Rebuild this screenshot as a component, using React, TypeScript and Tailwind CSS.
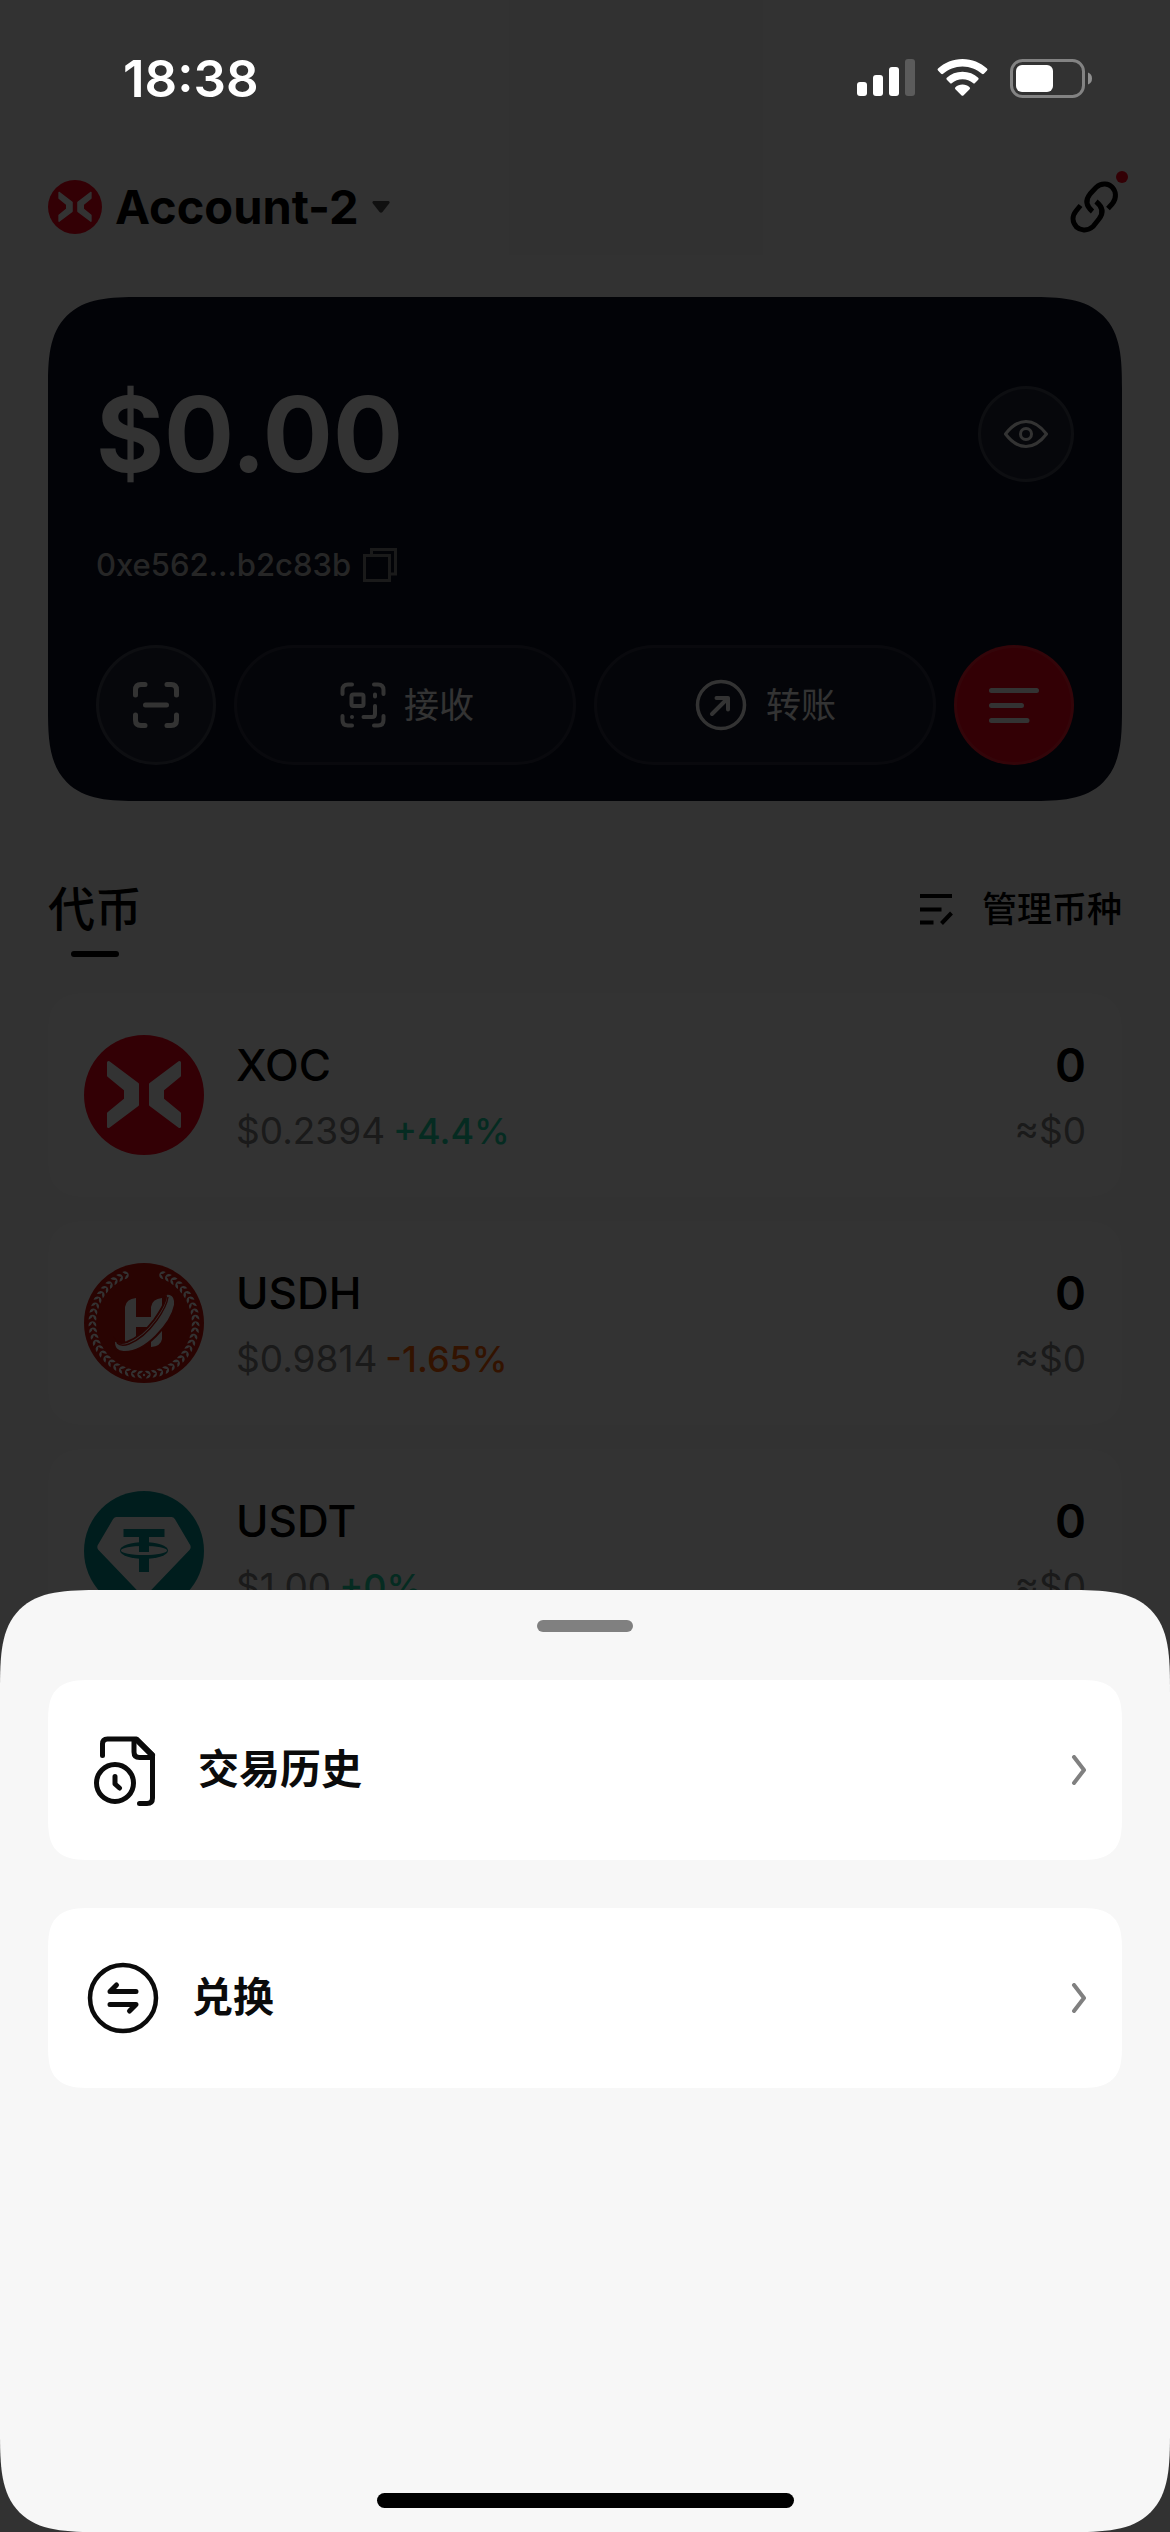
import React from "react";

function XocLogo({ className }: { className: string }) {
  return (
    <svg viewBox="0 0 120 120" className={className} aria-hidden="true">
      <circle cx="60" cy="60" r="60" fill="#ff001a" />
      <g fill="#fff" stroke="#fff" strokeWidth="3" strokeLinejoin="round">
        <path d="M24.5 27.5 53.5 49.3V69.7L24.5 91.5V78.5L41.5 64.5V54.5L24.5 40.5Z" />
        <path d="M95.5 27.5 66.5 49.3V69.7L95.5 91.5V78.5L78.5 64.5V54.5L95.5 40.5Z" />
      </g>
    </svg>
  );
}

const laurelAngles = Array.from({ length: 23 }, (_, i) => 7 + i * 7.05);

function UsdhLogo({ className }: { className: string }) {
  const leaf = "M0 .4Q-4.400 0 -3.800 -5Q-.8 -3.400 0 -.8Q.8 -3.400 3.800 -5Q4.400 0 0 .4Z";
  return (
    <svg viewBox="0 0 120 120" className={className} aria-hidden="true">
      <circle cx="60" cy="60" r="60" fill="#cd140a" />
      <g fill="#fff">
        <circle cx="60" cy="112" r="1.2" />
        {laurelAngles.map((a) => (
          <g key={a}>
            <path d={leaf} transform={`rotate(${a} 60 60) translate(60 111.5) rotate(90)`} />
            <path d={leaf} transform={`rotate(${-a} 60 60) translate(60 111.5) rotate(-90)`} />
          </g>
        ))}
        <path d="M41 44Q42 36 52 35V54H67V44Q68 36 78 35V76Q77 83 67 84V64H52V80L41 84Z" />
        <path
          d="M30 76Q34 82 43 79Q58 73 70 57Q82 40 82 33Q79 32 76 34Q80 30 86 31Q92 33 91 42Q88 57 72 73Q56 89 41 89Q29 90 30 76Z"
          stroke="#cd140a"
          strokeWidth="2"
        />
        <path d="M33 80Q37 84 45 81Q60 75 73 57Q83 43 84 34" fill="none" stroke="#cd140a" strokeWidth="1.4" />
      </g>
    </svg>
  );
}

function UsdtLogo({ className }: { className: string }) {
  return (
    <svg viewBox="0 0 120 120" className={className} aria-hidden="true">
      <circle cx="60" cy="60" r="60" fill="#009393" />
      <path
        d="M32.5 27H87.5Q89 27 90 28.5L105.500 55Q106 57 105 58L61 104Q60 105 59 104L15 58Q14 57 14.500 55L30 28.500Q31 27 32.500 27Z"
        fill="#fff"
        stroke="#fff"
        strokeWidth="2"
      />
      <ellipse cx="60" cy="59.500" rx="24" ry="8.500" fill="#009393" />
      <ellipse cx="60" cy="59.500" rx="23" ry="4.500" fill="#fff" />
      <path d="M39.500 38H80.500V46H65V61H55V46H39.500ZM55 64H65V81H55Z" fill="#009393" />
    </svg>
  );
}

function SignalIcon() {
  return (
    <svg viewBox="0 0 58 38" className="h-[38px] w-[58px]" fill="#fff" aria-hidden="true">
      <rect x="0" y="23" width="10" height="14" rx="3" />
      <rect x="16" y="16" width="10" height="21" rx="3" />
      <rect x="32" y="8" width="10" height="29" rx="3" />
      <rect x="48" y="0" width="10" height="37" rx="3" fill="#5b5b5b" />
    </svg>
  );
}

function WifiIcon() {
  return (
    <svg viewBox="0 0 51 38" className="h-[38px] w-[51px]" fill="#fff" aria-hidden="true">
      <path d="M25.500 0C35 0 43.500 3.700 50 9.600Q51 10.600 50 11.600L46.900 14.800Q45.900 15.700 44.900 14.800C39.700 10.200 33 7.400 25.500 7.400S11.300 10.200 6.100 14.800Q5.100 15.700 4.100 14.800L1 11.600Q0 10.600 1 9.600C7.500 3.700 16 0 25.500 0Z" />
      <path d="M25.500 12.800C31.700 12.800 37.100 15 41.200 18.800Q42.200 19.800 41.200 20.800L38 24Q37 25 36 24C33.200 21.600 29.600 20.200 25.500 20.200S17.800 21.600 15 24Q14 25 13 24L9.800 20.800Q8.800 19.800 9.800 18.800C13.900 15 19.300 12.800 25.500 12.800Z" />
      <path d="M25.500 25.600C28.300 25.600 30.700 26.600 32.600 28.200Q33.600 29.200 32.600 30.200L26.400 36.400Q25.500 37.300 24.600 36.400L18.400 30.200Q17.400 29.200 18.400 28.200C20.300 26.600 22.700 25.600 25.500 25.600Z" />
    </svg>
  );
}

function BatteryIcon() {
  return (
    <svg viewBox="0 0 82 39" className="h-[39px] w-[82px]" aria-hidden="true">
      <rect x="1.500" y="1.500" width="72" height="36" rx="11" fill="none" stroke="#838383" strokeWidth="3" />
      <rect x="6" y="6" width="37" height="27" rx="6" fill="#fff" />
      <path d="M78 13.500Q82 15 82 19.500T78 25.500Z" fill="#8f8f8f" />
    </svg>
  );
}

function LinkIcon() {
  return (
    <svg viewBox="0 0 54 54" className="size-[54px]" fill="none" stroke="#000" strokeWidth="5" aria-hidden="true">
      <path d="M24.500 31.500C17 25 18 19 22 14L28 7.500C34 2 41 4 44 7C48 11 49 18 44.500 23.500L40 28.500" />
      <path d="M28 21.500C36 28 35 34 31 39L25 46.500C19 52 12 50 8.500 47C4 42 4 36 8 31L12.500 25.500" />
    </svg>
  );
}

const lineIcon = {
  viewBox: "0 0 54 54",
  fill: "none",
  stroke: "currentColor",
  strokeLinecap: "round" as const,
  strokeLinejoin: "round" as const,
  "aria-hidden": true,
};

function ScanIcon() {
  return (
    <svg {...lineIcon} className="size-[54px]" strokeWidth="5">
      <path d="M6.500 17V12Q6.500 6.500 12 6.500H16M38 6.500H42Q47.500 6.500 47.500 12V17M47.500 37V42Q47.500 47.500 42 47.500H38M16 47.500H12Q6.500 47.500 6.500 42V37M16.500 27H37.500" />
    </svg>
  );
}

function ReceiveIcon() {
  return (
    <svg {...lineIcon} className="size-[54px]" strokeWidth="4">
      <path d="M6.500 16V12Q6.500 6.500 12 6.500H16M38 6.500H42Q47.500 6.500 47.500 12V16M47.500 38V42Q47.500 47.500 42 47.500H38M16 47.500H12Q6.500 47.500 6.500 42V38" />
      <rect x="15.500" y="16.500" width="12" height="11.500" rx="2" />
      <path d="M39 16.500V18.500M39 28V36Q39 39 36 39H27.500M16 39V39.100" />
    </svg>
  );
}

function TransferIcon() {
  return (
    <svg {...lineIcon} className="size-[54px]" strokeWidth="3.500">
      <circle cx="27" cy="27" r="23.500" />
      <path d="M18 36 34 20M22.500 20H34V31.500" strokeWidth="4" />
    </svg>
  );
}

function MenuIcon() {
  return (
    <svg {...lineIcon} className="size-[54px]" strokeWidth="5">
      <path d="M4.500 12.500H49.500M4.500 27.500H34.500M4.500 42.500H40" />
    </svg>
  );
}

function EyeIcon() {
  return (
    <svg {...lineIcon} className="size-[54px]" strokeWidth="3">
      <path d="M6.500 27C13 18.500 20 14.500 27 14.500S41 18.500 47.500 27C41 35.500 34 39.500 27 39.500S13 35.500 6.500 27Z" />
      <circle cx="27" cy="27" r="5.500" />
    </svg>
  );
}

function CopyIcon() {
  return (
    <svg viewBox="0 0 34 34" className="size-[34px]" fill="none" stroke="#808080" strokeWidth="3" aria-hidden="true">
      <path d="M8.500 7V1.500H32.500V26H27" />
      <rect x="1.500" y="7.500" width="25" height="25" />
    </svg>
  );
}

function ManageIcon() {
  return (
    <svg viewBox="0 0 36 36" className="size-9" fill="none" stroke="#000" strokeWidth="4" aria-hidden="true">
      <path d="M2 5H34M2 18.500H23.500M2 31.500H15.500M23.500 32.500 33.500 22" />
    </svg>
  );
}

function HistoryIcon() {
  return (
    <svg viewBox="0 0 84 84" className="size-[84px]" fill="none" stroke="#0b0b0b" strokeWidth="5" strokeLinecap="round" strokeLinejoin="round" aria-hidden="true">
      <path d="M18.500 27.500V16Q18.500 11 23.500 11H52L68.500 27V70Q68.500 75.500 63 75.500H55.500" />
      <path d="M50 12V24Q50 29.500 55.500 29.500H68" />
      <path d="M53 12 68 27" strokeWidth="6" />
      <circle cx="31" cy="55" r="18.500" />
      <path d="M31 48.500V56L35.500 60" />
    </svg>
  );
}

function SwapIcon() {
  return (
    <svg viewBox="0 0 78 78" className="size-[78px]" fill="none" stroke="#0b0b0b" strokeWidth="4.500" strokeLinecap="round" strokeLinejoin="round" aria-hidden="true">
      <circle cx="39" cy="39" r="33" />
      <path d="M52 32.500H26L32.500 26M26 45.500H52L45.500 52" strokeWidth="5" />
    </svg>
  );
}

function Chevron() {
  return (
    <svg viewBox="0 0 16 30" className="h-[30px] w-4" fill="none" stroke="#808080" strokeWidth="4" strokeLinecap="round" strokeLinejoin="round" aria-hidden="true">
      <path d="M4 2 14 15 4 28" />
    </svg>
  );
}

interface Token {
  name: string;
  price: string;
  change: string;
  changeClass: string;
  Logo: (p: { className: string }) => React.JSX.Element;
}

const tokens: Token[] = [
  { name: "XOC", price: "$0.2394", change: "+4.4%", changeClass: "text-[#19d7a5]", Logo: XocLogo },
  { name: "USDH", price: "$0.9814", change: "-1.65%", changeClass: "text-[#ff6000]", Logo: UsdhLogo },
  { name: "USDT", price: "$1.00", change: "+0%", changeClass: "text-[#19d7a5]", Logo: UsdtLogo },
];

const softCard = "rounded-[32px] supports-[corner-shape:squircle]:rounded-[44px] supports-[corner-shape:squircle]:[corner-shape:superellipse(1.6)]";

function TokenRow({ name, price, change, changeClass, Logo }: Token) {
  return (
    <li className={`flex items-center gap-8 bg-white px-9 pt-[39px] pb-[33px] ${softCard}`}>
      <Logo className="-mt-1.5 size-[120px] shrink-0" />
      <div className="min-w-0 flex-1 leading-[66px]">
        <p className="text-[44px] font-medium">{name}</p>
        <p className="flex items-baseline gap-2 text-[37px] text-[#808080]">
          {price}
          <span className={`text-[36px] font-medium ${changeClass}`}>{change}</span>
        </p>
      </div>
      <div className="text-right leading-[66px]">
        <p className="text-[47px] font-semibold">0</p>
        <p className="text-[37px] text-[#808080]">≈$0</p>
      </div>
    </li>
  );
}

function SheetItem({ icon, label }: { icon: React.ReactNode; label: string }) {
  return (
    <button type="button" className={`flex h-[180px] w-full items-center gap-[30px] bg-white px-9 text-left ${softCard}`}>
      {icon}
      <span className="flex-1 text-[41px] font-bold text-[#0b0b0b]">{label}</span>
      <Chevron />
    </button>
  );
}

export default function App() {
  return (
    <div className="relative flex h-screen min-h-[1800px] w-full flex-col overflow-hidden bg-[#f7f7f7] font-['Inter','Noto_Sans_CJK_SC',sans-serif] text-black">
      <div className="relative z-20 flex h-36 shrink-0 items-center justify-between pt-3 pr-[78px] pl-[123px] text-white">
        <time className="text-[51px] leading-none font-semibold">18:38</time>
        <div className="flex items-center gap-[22px]">
          <SignalIcon />
          <WifiIcon />
          <BatteryIcon />
        </div>
      </div>

      <main className="flex flex-col px-12">
        <header className="flex h-[126px] items-center justify-between">
          <button type="button" className="flex items-center gap-[13px]">
            <XocLogo className="size-[54px]" />
            <span className="text-[47px] leading-[60px] font-bold">Account-2</span>
            <svg viewBox="0 0 18 12" className="h-3 w-[18px]" fill="#505050" aria-hidden="true">
              <path d="M1.500 0H16.500Q18 .500 17.500 2L10.500 11Q9 12.500 7.500 11L.500 2Q0 .500 1.500 0Z" />
            </svg>
          </button>
          <button type="button" aria-label="连接" className="relative">
            <LinkIcon />
            <span className="absolute -top-[9px] -right-1.5 size-3 rounded-full bg-[#ff001a]" />
          </button>
        </header>

        <section className="mt-[27px] rounded-[72px] bg-[#0a0f23] px-12 pb-9 text-white supports-[corner-shape:squircle]:rounded-[92px] supports-[corner-shape:squircle]:[corner-shape:superellipse(1.6)]">
          <div className="flex items-center justify-between pt-[72px]">
            <p className="text-[104px] leading-[130px] font-bold">$0.00</p>
            <button type="button" aria-label="显示余额" className="flex size-24 items-center justify-center rounded-full border-3 border-white/15 bg-white/10">
              <EyeIcon />
            </button>
          </div>
          <div className="mt-[42px] flex h-[48px] items-center gap-3">
            <p className="text-[31px] font-medium text-[#bfbfbf]">0xe562...b2c83b</p>
            <button type="button" aria-label="复制地址">
              <CopyIcon />
            </button>
          </div>
          <div className="mt-14 flex gap-[18px]">
            <button type="button" aria-label="扫描" className="flex size-[120px] shrink-0 items-center justify-center rounded-full border-3 border-white/15 bg-white/10">
              <ScanIcon />
            </button>
            <button type="button" className="flex h-[120px] flex-1 items-center justify-center gap-[14px] rounded-full border-3 border-white/10 bg-white/5">
              <ReceiveIcon />
              <span className="text-[35px]">接收</span>
            </button>
            <button type="button" className="flex h-[120px] flex-1 items-center justify-center gap-[18px] rounded-full border-3 border-white/10 bg-white/5">
              <TransferIcon />
              <span className="text-[35px]">转账</span>
            </button>
            <button type="button" aria-label="菜单" className="flex size-[120px] shrink-0 items-center justify-center rounded-full border-3 border-white/10 bg-[#ff001a]">
              <MenuIcon />
            </button>
          </div>
        </section>

        <div className="mt-[78px] flex items-start justify-between">
          <h2 className="flex flex-col items-center gap-3 text-[47px] leading-[60px] font-medium">
            代币
            <span className="h-1.5 w-12 rounded-full bg-black" />
          </h2>
          <button type="button" className="flex h-[60px] items-center gap-7 text-[35px] font-medium">
            <ManageIcon />
            管理币种
          </button>
        </div>

        <ul className="mt-9 flex flex-col gap-6">
          {tokens.map((t) => (
            <TokenRow key={t.name} {...t} />
          ))}
        </ul>
      </main>

      <div className="absolute inset-0 z-10 bg-black/80" />

      <div
        role="dialog"
        aria-label="菜单"
        className="absolute inset-x-0 bottom-0 z-30 flex min-h-[942px] flex-col rounded-[80px] bg-[#f7f7f7] px-12 pt-[30px] pb-6 supports-[corner-shape:squircle]:rounded-[102px] supports-[corner-shape:squircle]:[corner-shape:superellipse(1.7)]"
      >
        <div className="h-3 w-24 self-center rounded-full bg-[#808080]" />
        <div className="mt-12 flex flex-col gap-12">
          <SheetItem icon={<HistoryIcon />} label="交易历史" />
          <SheetItem icon={<SwapIcon />} label="兑换" />
        </div>
        <div className="mt-auto h-[15px] w-[417px] self-center rounded-full bg-black" />
      </div>
    </div>
  );
}
